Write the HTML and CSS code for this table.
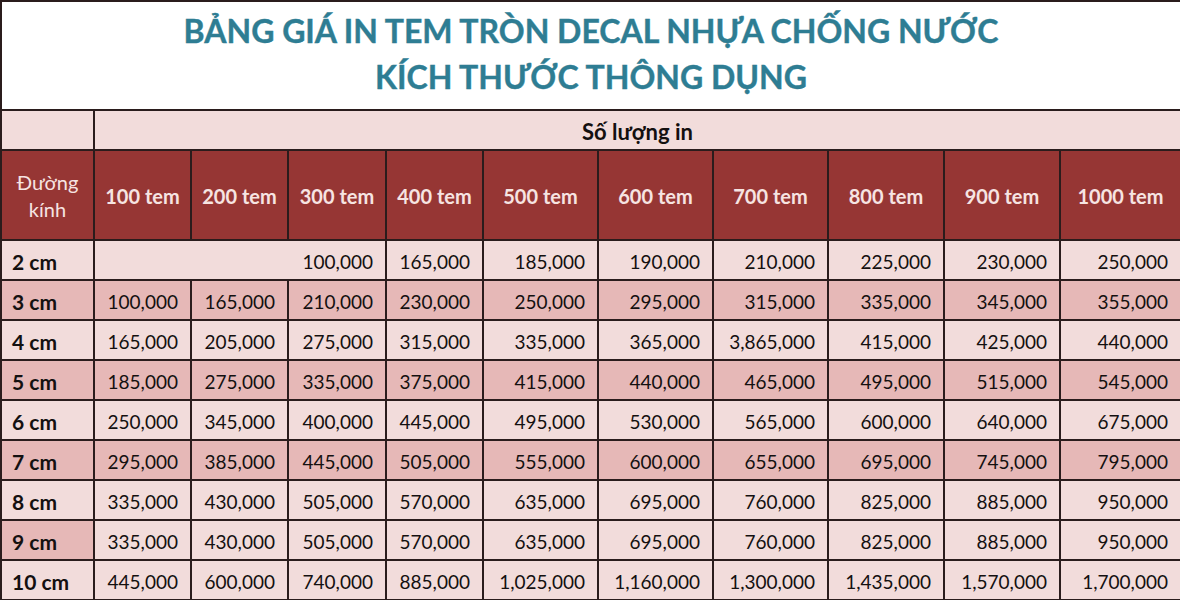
FILE: index.html
```html
<!DOCTYPE html>
<html lang="vi">
<head>
<meta charset="utf-8">
<title>Bảng giá in tem tròn decal nhựa chống nước</title>
<link rel="stylesheet" href="styles.css">
</head>
<body>
<div class="sheet">
  <div class="title">
    <div class="title-line">BẢNG GIÁ IN TEM TRÒN DECAL NHỰA CHỐNG NƯỚC</div>
    <div class="title-line">KÍCH THƯỚC THÔNG DỤNG</div>
  </div>
  <div class="grid">
    <div class="cell light"></div>
    <div class="cell light qty">Số lượng in</div>

    <div class="cell head head-label">Đường<br>kính</div>
    <div class="cell head">100 tem</div>
    <div class="cell head">200 tem</div>
    <div class="cell head">300 tem</div>
    <div class="cell head">400 tem</div>
    <div class="cell head">500 tem</div>
    <div class="cell head">600 tem</div>
    <div class="cell head">700 tem</div>
    <div class="cell head">800 tem</div>
    <div class="cell head">900 tem</div>
    <div class="cell head">1000 tem</div>

    <div class="cell light label">2 cm</div>
    <div class="cell light num span3">100,000</div>
    <div class="cell light num">165,000</div>
    <div class="cell light num">185,000</div>
    <div class="cell light num">190,000</div>
    <div class="cell light num">210,000</div>
    <div class="cell light num">225,000</div>
    <div class="cell light num">230,000</div>
    <div class="cell light num">250,000</div>

    <div class="cell dark label">3 cm</div>
    <div class="cell dark num">100,000</div>
    <div class="cell dark num">165,000</div>
    <div class="cell dark num">210,000</div>
    <div class="cell dark num">230,000</div>
    <div class="cell dark num">250,000</div>
    <div class="cell dark num">295,000</div>
    <div class="cell dark num">315,000</div>
    <div class="cell dark num">335,000</div>
    <div class="cell dark num">345,000</div>
    <div class="cell dark num">355,000</div>

    <div class="cell light label">4 cm</div>
    <div class="cell light num">165,000</div>
    <div class="cell light num">205,000</div>
    <div class="cell light num">275,000</div>
    <div class="cell light num">315,000</div>
    <div class="cell light num">335,000</div>
    <div class="cell light num">365,000</div>
    <div class="cell light num">3,865,000</div>
    <div class="cell light num">415,000</div>
    <div class="cell light num">425,000</div>
    <div class="cell light num">440,000</div>

    <div class="cell dark label">5 cm</div>
    <div class="cell dark num">185,000</div>
    <div class="cell dark num">275,000</div>
    <div class="cell dark num">335,000</div>
    <div class="cell dark num">375,000</div>
    <div class="cell dark num">415,000</div>
    <div class="cell dark num">440,000</div>
    <div class="cell dark num">465,000</div>
    <div class="cell dark num">495,000</div>
    <div class="cell dark num">515,000</div>
    <div class="cell dark num">545,000</div>

    <div class="cell light label">6 cm</div>
    <div class="cell light num">250,000</div>
    <div class="cell light num">345,000</div>
    <div class="cell light num">400,000</div>
    <div class="cell light num">445,000</div>
    <div class="cell light num">495,000</div>
    <div class="cell light num">530,000</div>
    <div class="cell light num">565,000</div>
    <div class="cell light num">600,000</div>
    <div class="cell light num">640,000</div>
    <div class="cell light num">675,000</div>

    <div class="cell dark label">7 cm</div>
    <div class="cell dark num">295,000</div>
    <div class="cell dark num">385,000</div>
    <div class="cell dark num">445,000</div>
    <div class="cell dark num">505,000</div>
    <div class="cell dark num">555,000</div>
    <div class="cell dark num">600,000</div>
    <div class="cell dark num">655,000</div>
    <div class="cell dark num">695,000</div>
    <div class="cell dark num">745,000</div>
    <div class="cell dark num">795,000</div>

    <div class="cell light label">8 cm</div>
    <div class="cell light num">335,000</div>
    <div class="cell light num">430,000</div>
    <div class="cell light num">505,000</div>
    <div class="cell light num">570,000</div>
    <div class="cell light num">635,000</div>
    <div class="cell light num">695,000</div>
    <div class="cell light num">760,000</div>
    <div class="cell light num">825,000</div>
    <div class="cell light num">885,000</div>
    <div class="cell light num">950,000</div>

    <div class="cell dark label">9 cm</div>
    <div class="cell light num">335,000</div>
    <div class="cell light num">430,000</div>
    <div class="cell light num">505,000</div>
    <div class="cell light num">570,000</div>
    <div class="cell light num">635,000</div>
    <div class="cell light num">695,000</div>
    <div class="cell light num">760,000</div>
    <div class="cell light num">825,000</div>
    <div class="cell light num">885,000</div>
    <div class="cell light num">950,000</div>

    <div class="cell light label">10 cm</div>
    <div class="cell light num">445,000</div>
    <div class="cell light num">600,000</div>
    <div class="cell light num">740,000</div>
    <div class="cell light num">885,000</div>
    <div class="cell light num">1,025,000</div>
    <div class="cell light num">1,160,000</div>
    <div class="cell light num">1,300,000</div>
    <div class="cell light num">1,435,000</div>
    <div class="cell light num">1,570,000</div>
    <div class="cell light num">1,700,000</div>
  </div>
</div>
</body>
</html>
```
FILE: styles.css
```css
html, body {
  margin: 0;
  padding: 0;
  background: #ffffff;
  overflow: hidden;
}

.sheet {
  width: 1180px;
  height: 600px;
  box-sizing: border-box;
  padding: 2px 0 0 2px;
  background: #2a1c1c;
  font-family: Lato, "Liberation Sans", sans-serif;
  overflow: hidden;
}

.title {
  height: 107px;
  margin-bottom: 2px;
  box-sizing: border-box;
  padding-top: 6px;
  background: #ffffff;
  color: #2e7d93;
  font-weight: 700;
  font-size: 32px;
  line-height: 46px;
  text-align: center;
  -webkit-text-stroke: 0.4px #2e7d93;
}

.grid {
  display: grid;
  grid-template-columns: 91px 95px 95px 96px 95px 113px 113px 113px 114px 114px 119px;
  grid-template-rows: 38px 88px;
  grid-auto-rows: 38px;
  gap: 2px;
}

.cell {
  display: flex;
  align-items: center;
  box-sizing: border-box;
  color: #141010;
  font-size: 19px;
  padding-top: 2px;
}

.light { background: #f2dcdb; }
.dark { background: #e6b8b7; }

.qty {
  grid-column: 2 / span 10;
  justify-content: center;
  font-weight: 700;
  font-size: 22px;
}

.head {
  background: #963634;
  color: #f6e4e2;
  font-weight: 700;
  font-size: 20px;
  justify-content: center;
  text-align: center;
}

.head-label {
  font-weight: 400;
  font-size: 20px;
  line-height: 27px;
}

.label {
  padding-left: 10px;
  font-weight: 700;
  font-size: 21px;
}

.num {
  justify-content: flex-end;
  padding-right: 12px;
}

.span3 {
  grid-column: span 3;
}
```
